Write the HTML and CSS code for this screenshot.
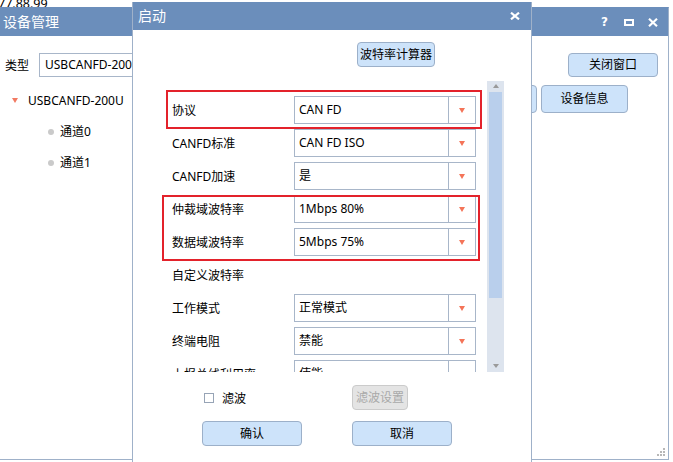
FILE: index.html
```html
<!DOCTYPE html>
<html lang="zh-CN">
<head>
<meta charset="utf-8">
<title>设备管理</title>
<link rel="stylesheet" href="styles.css">
</head>
<body>
<div class="desk">
  <div class="ip">77.88.99</div>

  <div class="win main">
    <div class="titlebar">
      <span class="title">设备管理</span>
      <div class="tb-icons">
        <span class="help">?</span>
        <svg class="ico" width="10" height="7" viewBox="0 0 10 7"><rect x="1" y="1" width="8" height="5" fill="none" stroke="#fff" stroke-width="2"/></svg>
        <svg class="ico" width="10" height="9" viewBox="0 0 10 9"><path d="M1 0.8L9 8.2M9 0.8L1 8.2" stroke="#fff" stroke-width="2.2"/></svg>
      </div>
    </div>
    <div class="main-body">
      <div class="left-col">
        <div class="type-row">
          <span class="type-label">类型</span>
          <div class="type-input">USBCANFD-200U</div>
        </div>
        <ul class="tree">
          <li class="node"><span class="tri"></span>USBCANFD-200U</li>
          <li class="leaf"><span class="dot"></span>通道0</li>
          <li class="leaf"><span class="dot"></span>通道1</li>
        </ul>
      </div>
      <div class="right-col">
        <button class="btn close-btn">关闭窗口</button>
        <div class="btn-pair">
          <button class="btn tall">启动</button>
          <button class="btn tall">设备信息</button>
        </div>
      </div>
    </div>
    <svg class="grip" width="9" height="9" viewBox="0 0 9 9">
      <rect x="6" y="0" width="2" height="2" fill="#b8b8b8"/>
      <rect x="3" y="3" width="2" height="2" fill="#b8b8b8"/>
      <rect x="6" y="3" width="2" height="2" fill="#b8b8b8"/>
      <rect x="0" y="6" width="2" height="2" fill="#b8b8b8"/>
      <rect x="3" y="6" width="2" height="2" fill="#b8b8b8"/>
      <rect x="6" y="6" width="2" height="2" fill="#b8b8b8"/>
    </svg>
  </div>

  <div class="win dialog">
    <div class="titlebar dlg-title">
      <span class="title">启动</span>
      <svg class="ico dlg-close" width="10" height="8" viewBox="0 0 10 8"><path d="M1 0.7L9 7.3M9 0.7L1 7.3" stroke="#fff" stroke-width="2.2"/></svg>
    </div>
    <div class="dlg-body">
      <div class="calc-row"><button class="btn calc">波特率计算器</button></div>
      <div class="scroll">
        <div class="scroll-content">
          <div class="row"><span class="lbl">协议</span><div class="combo"><span class="val">CAN FD</span><span class="arrow"><i></i></span></div></div>
          <div class="row"><span class="lbl">CANFD标准</span><div class="combo"><span class="val">CAN FD ISO</span><span class="arrow"><i></i></span></div></div>
          <div class="row"><span class="lbl">CANFD加速</span><div class="combo"><span class="val">是</span><span class="arrow"><i></i></span></div></div>
          <div class="row"><span class="lbl">仲裁域波特率</span><div class="combo"><span class="val">1Mbps 80%</span><span class="arrow"><i></i></span></div></div>
          <div class="row"><span class="lbl">数据域波特率</span><div class="combo"><span class="val">5Mbps 75%</span><span class="arrow"><i></i></span></div></div>
          <div class="row"><span class="lbl">自定义波特率</span></div>
          <div class="row"><span class="lbl">工作模式</span><div class="combo"><span class="val">正常模式</span><span class="arrow"><i></i></span></div></div>
          <div class="row"><span class="lbl">终端电阻</span><div class="combo"><span class="val">禁能</span><span class="arrow"><i></i></span></div></div>
          <div class="row"><span class="lbl">上报总线利用率</span><div class="combo"><span class="val">使能</span><span class="arrow"><i></i></span></div></div>
        </div>
        <div class="vscroll">
          <span class="sb-up"></span>
          <div class="sb-track"><div class="sb-thumb"></div></div>
          <span class="sb-down"></span>
        </div>
      </div>
      <div class="actions">
        <label class="chk"><span class="box"></span>滤波</label>
        <button class="btn disabled" disabled>滤波设置</button>
        <button class="btn wide">确认</button>
        <button class="btn wide">取消</button>
      </div>
    </div>
    <div class="mark mark1"></div>
    <div class="mark mark2"></div>
  </div>
</div>
</body>
</html>
```

FILE: styles.css
```css
* { box-sizing: border-box; }
html, body { margin: 0; padding: 0; }
body {
  width: 673px;
  height: 462px;
  overflow: hidden;
  background: #fff;
  font-family: "Noto Sans", "Noto Sans CJK SC", sans-serif;
  font-size: 12px;
  color: #000;
}
.desk { position: relative; width: 673px; height: 462px; overflow: hidden; }

.ip {
  position: absolute;
  left: -2px;
  top: -3px;
  font-size: 12.5px;
  line-height: 14px;
}

.win {
  position: absolute;
  background: #fff;
  border: 1px solid #9fb1c9;
}

.titlebar {
  background: #6b8ebb;
  color: #fff;
  display: flex;
  align-items: center;
}
.title { font-size: 14px; line-height: 20px; }
.ico { display: block; }

/* main window */
.main {
  left: -1px;
  top: 7px;
  width: 670px;
  height: 453px;
  display: flex;
  flex-direction: column;
  border-top-color: #6b8ebb;
}
.main .titlebar { height: 28px; padding: 0 10px 0 3px; }
.tb-icons { margin-left: auto; display: flex; align-items: center; gap: 14px; }
.help { font-family: "DejaVu Sans", sans-serif; font-weight: bold; font-size: 12px; line-height: 12px; margin-right: 2px; }

.main-body { flex: 1; display: flex; justify-content: space-between; }
.left-col { padding: 17px 0 0 5px; }
.type-row { display: flex; align-items: center; height: 24px; }
.type-label { width: 34px; }
.type-input {
  width: 200px;
  height: 24px;
  border: 1px solid #a8b6c9;
  padding-left: 5px;
  line-height: 22px;
}
.tree { list-style: none; margin: 8px 0 0; padding: 0; }
.tree li { height: 31px; line-height: 31px; display: flex; align-items: center; }
.node { padding-left: 7px; }
.tri {
  width: 0; height: 0;
  border-left: 3px solid transparent;
  border-right: 3px solid transparent;
  border-top: 5px solid #f27a62;
  margin-right: 10px;
}
.leaf { padding-left: 43px; }
.dot { width: 6px; height: 6px; border-radius: 50%; background: #cacaca; margin-right: 6px; }

.right-col { display: flex; flex-direction: column; align-items: flex-end; padding-top: 17px; }
.close-btn { width: 90px; height: 24px; margin-right: 10px; }
.btn-pair { display: flex; gap: 4px; margin-top: 8px; margin-right: 40px; }
.tall { width: 87px; height: 28px; }

.grip { position: absolute; right: 2px; bottom: 2px; }

/* buttons */
.btn {
  font-family: inherit;
  font-size: 12px;
  color: #000;
  background: #cde3fa;
  border: 1px solid #9cb0c9;
  border-radius: 4px;
  padding: 0;
  line-height: 1;
}
.btn.disabled { background: #e4e4e4; border-color: #cbcbcb; color: #a9a9a9; }

/* dialog */
.dialog {
  left: 132px;
  top: 2px;
  width: 400px;
  height: 472px;
  border-top: 0;
}
.dlg-title { height: 28px; padding: 0 11px 0 5px; }
.dlg-close { margin-left: auto; }
.dlg-body { display: flex; flex-direction: column; }
.calc-row { padding: 12px 0 0 224px; }
.calc { width: 78px; height: 25px; }

.scroll {
  margin: 14px 0 0 27px;
  width: 344px;
  height: 291px;
  display: flex;
}
.scroll-content { flex: 1; overflow: hidden; padding: 15px 0 0 12px; }
.row { display: flex; align-items: center; height: 28px; margin-bottom: 5px; }
.lbl { width: 122px; }
.combo {
  width: 182px;
  height: 28px;
  border: 1px solid #a8b6c9;
  display: flex;
}
.val { flex: 1; padding-left: 4px; line-height: 26px; }
.arrow {
  width: 27px;
  border-left: 1px solid #a8b6c9;
  display: flex;
  align-items: center;
  justify-content: center;
}
.arrow i {
  width: 0; height: 0;
  border-left: 3.5px solid transparent;
  border-right: 3.5px solid transparent;
  border-top: 5px solid #f47458;
}

.vscroll {
  width: 17px;
  background: #dde4ee;
  display: flex;
  flex-direction: column;
  align-items: center;
  padding: 3px 0 3px;
}
.sb-up, .sb-down {
  width: 0; height: 0;
  border-left: 3px solid transparent;
  border-right: 3px solid transparent;
}
.sb-up { border-bottom: 4px solid #9a9a9a; }
.sb-down { border-top: 4px solid #9a9a9a; margin-bottom: 1px; }
.sb-track { flex: 1; width: 100%; padding: 4px 2px 0; }
.sb-thumb { width: 13px; height: 206px; background: #b9cfec; }

.actions {
  margin: 13px 0 0 69px;
  display: grid;
  grid-template-columns: 100px 100px;
  column-gap: 50px;
  row-gap: 11px;
  align-items: center;
}
.chk { display: flex; align-items: center; padding-left: 2px; }
.box { width: 10px; height: 10px; border: 1px solid #97a4b6; margin-right: 8px; }
.disabled { width: 56px; height: 25px; }
.wide { width: 100px; height: 25px; }

.mark {
  position: absolute;
  border: 2px solid #e3222b;
  pointer-events: none;
}
.mark1 { left: 33px; top: 88px; width: 316px; height: 39px; }
.mark2 { left: 29px; top: 193px; width: 318px; height: 66px; }
```
